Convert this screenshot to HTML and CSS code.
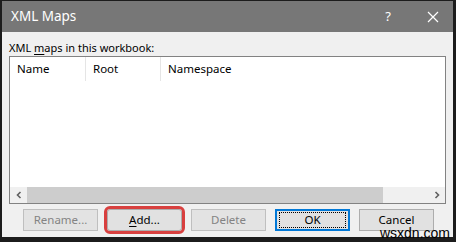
FILE: index.html
```html
<!DOCTYPE html>
<html>
<head>
<meta charset="utf-8">
<link rel="stylesheet" href="styles.css">
</head>
<body>
<div class="frame">
  <div class="titlebar">
    <span class="title">XML Maps</span>
    <span class="help">?</span>
    <svg class="close" width="12" height="12" viewBox="0 0 12 12"><path d="M1 1L11 11M11 1L1 11" stroke="#fff" stroke-width="1.2" fill="none"/></svg>
  </div>
  <div class="body">
    <div class="label">XML <u>m</u>aps in this workbook:</div>
    <div class="list">
      <div class="header">
        <div class="col c1">Name</div>
        <div class="col c2">Root</div>
        <div class="col c3">Namespace</div>
      </div>
      <div class="rows"></div>
      <div class="hscroll">
        <div class="arrow"><svg width="8" height="8" viewBox="0 0 8 8"><path d="M5.5 1L2.5 4L5.5 7" stroke="#606060" stroke-width="1.6" fill="none"/></svg></div>
        <div class="thumb"></div>
        <div class="track"></div>
        <div class="arrow"><svg width="8" height="8" viewBox="0 0 8 8"><path d="M2.5 1L5.5 4L2.5 7" stroke="#606060" stroke-width="1.6" fill="none"/></svg></div>
      </div>
    </div>
    <div class="buttons">
      <div class="btn disabled">Rename...</div>
      <div class="btn marked"><span><u>A</u>dd...</span></div>
      <div class="btn disabled">Delete</div>
      <div class="btn default"><span class="focus">OK</span></div>
      <div class="btn">Cancel</div>
    </div>
  </div>
  <div class="watermark">wsxdn.com</div>
</div>
</body>
</html>
```
FILE: styles.css
```css
html, body {
  margin: 0;
  padding: 0;
  background: #1c1c1c;
}
.frame {
  position: relative;
  box-sizing: border-box;
  width: 456px;
  height: 242px;
  border-style: solid;
  border-color: #1c1c1c;
  border-width: 1px 3px 5px 2px;
  background: #f0f0f0;
  font-family: "Noto Sans", "Open Sans", sans-serif;
  display: flex;
  flex-direction: column;
}
.titlebar {
  height: 31px;
  background: #777777;
  color: #fff;
  display: flex;
  align-items: center;
  padding-left: 9px;
  flex: none;
}
.title {
  font-size: 13.5px;
  flex: 1;
  margin-top: -1px;
}
.help {
  font-size: 13px;
  margin-right: 36px;
  margin-top: -1px;
}
.close {
  margin-right: 14px;
}
.body {
  flex: 1;
  padding: 8px 7px 0 7px;
  display: flex;
  flex-direction: column;
}
.label {
  font-size: 11px;
  line-height: 15px;
  height: 16px;
  color: #000;
}
.label u {
  text-underline-offset: 2px;
}
.list {
  height: 146px;
  border: 1px solid #828282;
  background: #fff;
  display: flex;
  flex-direction: column;
}
.header {
  display: flex;
  height: 24px;
  flex: none;
}
.col {
  font-size: 11.5px;
  line-height: 24px;
  padding-left: 7px;
  box-sizing: border-box;
  border-right: 1px solid #e5e5e5;
  color: #000;
}
.c1 { width: 76px; }
.c2 { width: 75px; }
.c3 { border-right: none; }
.rows {
  flex: 1;
}
.hscroll {
  height: 16px;
  display: flex;
  background: #f0f0f0;
  flex: none;
}
.arrow {
  width: 17px;
  display: flex;
  align-items: center;
  justify-content: center;
}
.thumb {
  width: 356px;
  background: #cdcdcd;
}
.track {
  flex: 1;
}
.buttons {
  display: flex;
  gap: 9px;
  padding-left: 14px;
  margin-top: 5px;
}
.btn {
  box-sizing: border-box;
  width: 75px;
  height: 22px;
  border: 1px solid #adadad;
  background: #e1e1e1;
  font-size: 11.5px;
  line-height: 13px;
  text-align: center;
  color: #000;
  display: flex;
  align-items: center;
  justify-content: center;
  padding-bottom: 2px;
}
.btn.disabled {
  color: #838383;
  border-color: #bfbfbf;
  background: #e3e3e3;
}
.btn.marked {
  outline: 3px solid #d8403f;
  outline-offset: 0px;
  border-radius: 3px;
}
.btn.marked u {
  text-underline-offset: 2px;
}
.btn.default {
  border: 2px solid #0078d7;
  padding-bottom: 0;
}
.focus {
  box-sizing: border-box;
  width: 67px;
  height: 16px;
  border: 1px dotted #000;
  line-height: 14px;
}
.watermark {
  position: absolute;
  right: 2px;
  bottom: -2px;
  font-family: "Liberation Sans", Arial, sans-serif;
  font-size: 14px;
  color: #000;
  line-height: 11px;
  padding: 0 1px;
}
```
